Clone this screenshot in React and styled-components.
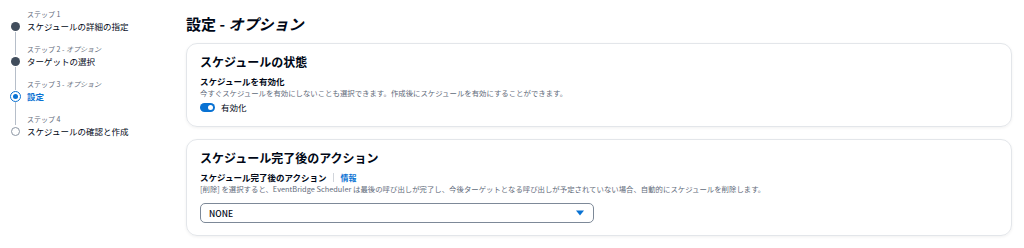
import React from 'react';
import styled, { createGlobalStyle } from 'styled-components';

const GlobalStyle = createGlobalStyle`
    body {
        margin: 0;
        background-color: #FFFFFF;
        font-family: "Noto Sans CJK JP", "Noto Sans", sans-serif;
        color: #000716;
    }
`;

const steps = [
    { label: 'ステップ 1', title: 'スケジュールの詳細の指定', status: 'done' },
    { label: 'ステップ 2', optional: true, title: 'ターゲットの選択', status: 'done' },
    { label: 'ステップ 3', optional: true, title: '設定', status: 'current' },
    { label: 'ステップ 4', title: 'スケジュールの確認と作成', status: 'todo' },
];

const Marker = ({ status }) => {
    if (status === 'current') {
        return <CurrentDot><span /></CurrentDot>;
    }
    return <Dot $status={status} />;
};

const App = () => {
    return (
        <>
            <GlobalStyle />
            <Layout>
                <Sidebar>
                    {steps.map((step, i) => (
                        <Step key={step.label}>
                            <Track>
                                <Segment $line={i !== 0} $h={12} />
                                <MarkerBox><Marker status={step.status} /></MarkerBox>
                                <Segment $line={i !== steps.length - 1} $h={11} />
                            </Track>
                            <StepText>
                                <StepLabel>
                                    {step.label}
                                    {step.optional && <> - <i>オプション</i></>}
                                </StepLabel>
                                <StepTitle $current={step.status === 'current'}>{step.title}</StepTitle>
                            </StepText>
                        </Step>
                    ))}
                </Sidebar>

                <Main>
                    <Heading>設定 - <i>オプション</i></Heading>

                    <Card>
                        <CardTitle>スケジュールの状態</CardTitle>
                        <FieldLabel>スケジュールを有効化</FieldLabel>
                        <FieldDesc>今すぐスケジュールを有効にしないことも選択できます。作成後にスケジュールを有効にすることができます。</FieldDesc>
                        <ToggleRow>
                            <Toggle><span /></Toggle>
                            有効化
                        </ToggleRow>
                    </Card>

                    <Card>
                        <CardTitle>スケジュール完了後のアクション</CardTitle>
                        <FieldLabel>
                            スケジュール完了後のアクション
                            <Divider />
                            <InfoLink>情報</InfoLink>
                        </FieldLabel>
                        <FieldDesc>[削除] を選択すると、EventBridge Scheduler は最後の呼び出しが完了し、今後ターゲットとなる呼び出しが予定されていない場合、自動的にスケジュールを削除します。</FieldDesc>
                        <Select>
                            NONE
                            <svg width="8" height="6" viewBox="0 0 8 6">
                                <path d="M0 0.5 H8 L4 5.5 Z" fill="#0972d3" />
                            </svg>
                        </Select>
                    </Card>
                </Main>
            </Layout>
        </>
    );
};

export default App;

const Layout = styled.div`
    display: flex;
    width: 1024px;
    height: 248px;
`;

const Sidebar = styled.div`
    width: 166px;
    padding: 8px 0 0 10px;
    display: flex;
    flex-direction: column;
`;

const Step = styled.div`
    display: flex;
    flex-direction: row;
    height: 35px;
`;

const Track = styled.div`
    width: 11px;
    display: flex;
    flex-direction: column;
    align-items: center;
`;

const Segment = styled.div`
    width: 1px;
    height: ${p => p.$h}px;
    background-color: ${p => p.$line ? '#b6bec9' : 'transparent'};
`;

const MarkerBox = styled.div`
    height: 12px;
    width: 11px;
    display: flex;
    align-items: center;
    justify-content: center;
`;

const Dot = styled.div`
    box-sizing: border-box;
    width: 9px;
    height: 9px;
    border-radius: 50%;
    background-color: ${p => p.$status === 'done' ? '#414d5c' : '#FFFFFF'};
    border: ${p => p.$status === 'done' ? 'none' : '1px solid #8c96a3'};
`;

const CurrentDot = styled.div`
    box-sizing: border-box;
    width: 11px;
    height: 11px;
    border-radius: 50%;
    border: 1.5px solid #0972d3;
    background-color: #FFFFFF;
    display: flex;
    align-items: center;
    justify-content: center;

    span {
        width: 5px;
        height: 5px;
        border-radius: 50%;
        background-color: #0972d3;
    }
`;

const StepText = styled.div`
    margin-left: 6px;
    display: flex;
    flex-direction: column;
`;

const StepLabel = styled.div`
    height: 12px;
    line-height: 12px;
    font-size: 7px;
    color: #5f6b7a;
    white-space: nowrap;
`;

const StepTitle = styled.div`
    height: 12px;
    line-height: 12px;
    font-size: 8.5px;
    font-weight: ${p => p.$current ? 700 : 400};
    color: ${p => p.$current ? '#0972d3' : '#000716'};
    white-space: nowrap;
`;

const Main = styled.div`
    flex: 1;
    padding: 14px 12px 0 10px;
    display: flex;
    flex-direction: column;
    gap: 12px;
`;

const Heading = styled.h1`
    margin: 0 0 -3px;
    font-size: 15px;
    line-height: 20px;
    font-weight: 700;
`;

const Card = styled.div`
    border: 1px solid #e3e6ea;
    border-radius: 11px;
    padding: 11px 13px 12px;
    box-shadow: 0 1px 3px rgba(0, 7, 22, 0.06);
    display: flex;
    flex-direction: column;
    align-items: flex-start;
`;

const CardTitle = styled.h2`
    margin: 0 0 7px;
    font-size: 12px;
    line-height: 14px;
    font-weight: 700;
`;

const FieldLabel = styled.div`
    display: flex;
    align-items: center;
    font-size: 8.5px;
    line-height: 11px;
    font-weight: 700;
`;

const Divider = styled.span`
    width: 1px;
    height: 9px;
    margin: 0 6px 0 7px;
    background-color: #d1d5db;
`;

const InfoLink = styled.span`
    color: #0972d3;
    font-size: 8px;
`;

const FieldDesc = styled.div`
    font-size: 7.4px;
    line-height: 11px;
    color: #5f6b7a;
`;

const ToggleRow = styled.div`
    margin-top: 2px;
    height: 14px;
    display: flex;
    align-items: center;
    gap: 6px;
    font-size: 8.5px;
`;

const Toggle = styled.div`
    box-sizing: border-box;
    width: 15px;
    height: 9px;
    border-radius: 5px;
    background-color: #0972d3;
    padding: 2px;
    display: flex;
    justify-content: flex-end;

    span {
        width: 5px;
        height: 5px;
        border-radius: 50%;
        background-color: #FFFFFF;
    }
`;

const Select = styled.div`
    box-sizing: border-box;
    margin-top: 9px;
    width: 394px;
    height: 20px;
    padding: 0 9px 0 8px;
    border: 1px solid #7d8998;
    border-radius: 5px;
    display: flex;
    align-items: center;
    justify-content: space-between;
    font-size: 8.5px;
    font-weight: 500;
`;
